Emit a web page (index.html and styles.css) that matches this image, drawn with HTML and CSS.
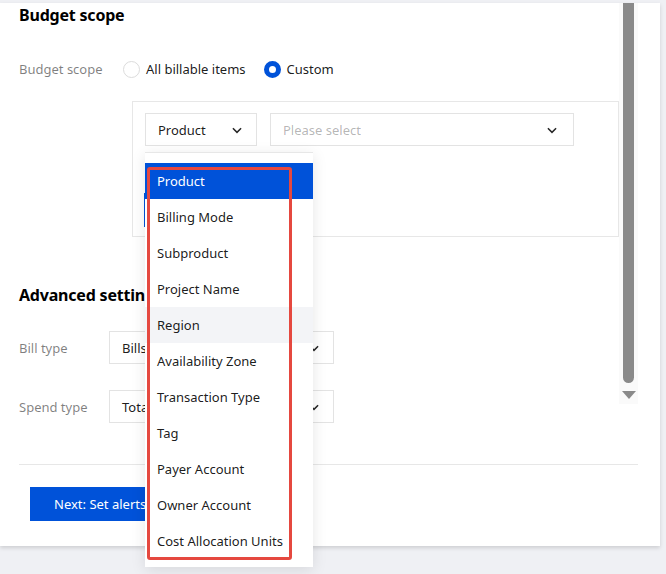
FILE: index.html
```html
<!DOCTYPE html>
<html lang="en">
<head>
    <meta charset="UTF-8">
    <meta name="viewport" content="width=device-width, initial-scale=1.0">
    <title>Budget scope</title>
    <link rel="stylesheet" href="styles.css">
</head>
<body>
    <div class="card">
        <div class="content">
            <h2 class="section-title">Budget scope</h2>
            <div class="form-row scope-row">
                <span class="label scope-label">Budget scope</span>
                <label class="radio">
                    <span class="radio-dot"></span>
                    All billable items
                </label>
                <label class="radio checked">
                    <span class="radio-dot"></span>
                    Custom
                </label>
            </div>

            <div class="filter-box">
                <div class="filter-row">
                    <div class="select dim-select">
                        <span>Product</span>
                        <svg class="chevron" viewBox="0 0 12 12"><path d="M2.5 4.5 6 8l3.5-3.5"/></svg>
                    </div>
                    <div class="select value-select">
                        <span class="placeholder">Please select</span>
                        <svg class="chevron" viewBox="0 0 12 12"><path d="M2.5 4.5 6 8l3.5-3.5"/></svg>
                    </div>
                </div>
                <div class="add-btn"></div>

                <ul class="dropdown">
                    <li class="item selected">Product</li>
                    <li class="item">Billing Mode</li>
                    <li class="item">Subproduct</li>
                    <li class="item">Project Name</li>
                    <li class="item hover">Region</li>
                    <li class="item">Availability Zone</li>
                    <li class="item">Transaction Type</li>
                    <li class="item">Tag</li>
                    <li class="item">Payer Account</li>
                    <li class="item">Owner Account</li>
                    <li class="item">Cost Allocation Units</li>
                </ul>
                <div class="highlight"></div>
            </div>

            <h2 class="section-title advanced-title">Advanced settings</h2>
            <div class="form-row field-row">
                <span class="label field-label">Bill type</span>
                <div class="select field-select">
                    <span>Bills</span>
                    <svg class="chevron" viewBox="0 0 12 12"><path d="M2.5 4.5 6 8l3.5-3.5"/></svg>
                </div>
            </div>
            <div class="form-row field-row spend-row">
                <span class="label field-label">Spend type</span>
                <div class="select field-select">
                    <span>Total</span>
                    <svg class="chevron" viewBox="0 0 12 12"><path d="M2.5 4.5 6 8l3.5-3.5"/></svg>
                </div>
            </div>
        </div>

        <div class="footer">
            <button class="primary-btn">Next: Set alerts</button>
        </div>

        <div class="scrollbar">
            <div class="thumb"></div>
            <svg class="arrow" viewBox="0 0 14 10"><path d="M0 1h14L7 9z"/></svg>
        </div>
    </div>
</body>
</html>
```

FILE: styles.css
```css
html {
    height: 100%;
}
body {
    margin: 0;
    min-height: 100%;
    background-color: #eff0f4;
    font-family: "Noto Sans", "Liberation Sans", sans-serif;
    font-size: 13px;
    color: rgba(0, 0, 0, 0.9);
}
.card {
    position: relative;
    width: 660px;
    height: 543px;
    background-color: #ffffff;
    box-shadow: 0 2px 4px rgba(0, 0, 0, 0.14);
}
.content {
    padding-left: 19px;
    padding-right: 22px;
}
.section-title {
    margin: 3px 0 0;
    font-size: 16px;
    line-height: 24px;
    font-weight: 700;
    color: #000000;
    letter-spacing: -0.2px;
}
.form-row {
    display: flex;
    align-items: center;
}
.label {
    color: rgba(0, 0, 0, 0.5);
}
.scope-row {
    margin-top: 26px;
    height: 32px;
}
.scope-label {
    width: 104px;
}
.radio {
    display: flex;
    align-items: center;
    gap: 6px;
    margin-right: 18px;
}
.radio-dot {
    box-sizing: border-box;
    width: 17px;
    height: 17px;
    border: 1px solid #dcdcdc;
    border-radius: 50%;
}
.radio.checked .radio-dot {
    border: 5px solid #0052d9;
}
.filter-box {
    position: relative;
    box-sizing: border-box;
    width: 487px;
    margin: 16px 0 0 113px;
    padding: 11px 12px 9px;
    border: 1px solid #e7e7e7;
}
.filter-row {
    display: flex;
    gap: 13px;
}
.select {
    box-sizing: border-box;
    display: flex;
    align-items: center;
    justify-content: space-between;
    height: 33px;
    padding: 0 12px;
    border: 1px solid #e3e3e3;
}
.dim-select {
    width: 112px;
}
.value-select {
    width: 304px;
    padding-right: 14px;
}
.placeholder {
    color: rgba(0, 0, 0, 0.3);
}
.chevron {
    width: 14px;
    height: 14px;
    fill: none;
    stroke: rgba(0, 0, 0, 0.85);
    stroke-width: 1.3;
}
.add-btn {
    width: 90px;
    height: 34px;
    margin: 47px 0 0 -1px;
    box-sizing: border-box;
    border: 1px solid #0052d9;
}
.dropdown {
    position: absolute;
    top: 50px;
    left: 12px;
    width: 168px;
    margin: 0;
    padding: 10px 0 8px;
    list-style: none;
    background-color: #ffffff;
    border-top: 1px solid #e7e7e7;
    box-shadow: 0 3px 14px rgba(0, 0, 0, 0.1);
    z-index: 2;
}
.item {
    height: 36px;
    line-height: 36px;
    padding-left: 12px;
}
.item.selected {
    background-color: #0052d9;
    color: #ffffff;
}
.item.hover {
    background-color: #f3f4f7;
}
.highlight {
    position: absolute;
    top: 65px;
    left: 14px;
    width: 145px;
    height: 393px;
    box-sizing: border-box;
    border: 3px solid #e5483f;
    border-radius: 3px;
    z-index: 3;
}
.advanced-title {
    margin-top: 46px;
}
.field-row {
    margin-top: 24px;
}
.spend-row {
    margin-top: 26px;
}
.field-label {
    width: 90px;
}
.field-select {
    width: 225px;
    padding-right: 12px;
}
.footer {
    margin: 41px 22px 0 19px;
    padding: 22px 0 0 11px;
    border-top: 1px solid #e7e7e7;
}
.primary-btn {
    display: block;
    height: 34px;
    width: 150px;
    padding: 0 24px;
    border: none;
    background-color: #0052d9;
    color: #ffffff;
    font-family: inherit;
    font-size: 13px;
    text-align: left;
}
.scrollbar {
    position: absolute;
    top: 0;
    right: 22px;
    width: 19px;
    height: 401px;
    background-color: #fafafa;
}
.thumb {
    width: 11px;
    height: 380px;
    margin-left: 4px;
    background-color: #8a8a8a;
    border-radius: 0 0 6px 6px;
}
.arrow {
    display: block;
    width: 14px;
    height: 10px;
    margin: 7px 0 0 3px;
    fill: #8a8a8a;
}
```
